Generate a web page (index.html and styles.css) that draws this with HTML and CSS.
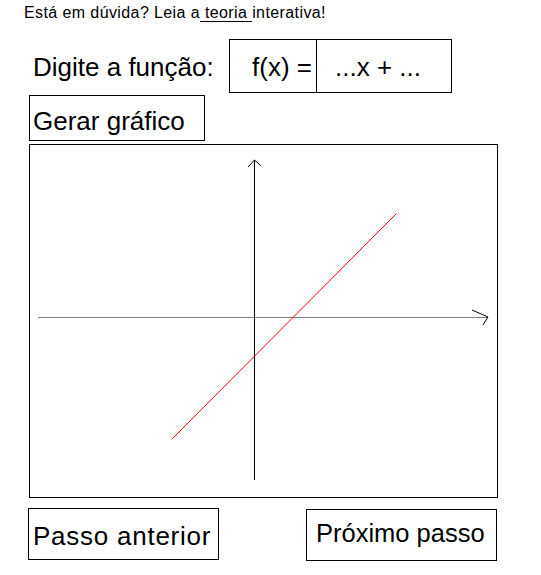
FILE: index.html
```html
<!DOCTYPE html>
<html lang="pt">

<head>
    <meta charset="UTF-8">
    <meta name="viewport" content="width=device-width, initial-scale=1.0">
    <title>Gráfico da função</title>
    <link rel="stylesheet" href="styles.css">
</head>

<body>
    <p class="hint">Está em dúvida? Leia a<a href="#" class="hint-link"> teoria </a>interativa!</p>

    <div class="func-row">
        <span class="func-label">Digite a função:</span>
        <div class="func-box">
            <span class="func-fx">f(x) =</span>
            <span class="func-expr">...x + ...</span>
        </div>
    </div>

    <button class="btn gen-btn">Gerar gráfico</button>

    <div class="graph">
        <svg class="graph-svg" width="467" height="352" viewBox="0 0 467 352">
            <!-- eixo x -->
            <line x1="8" y1="172.5" x2="458" y2="172.5" stroke="#808080" stroke-width="1" shape-rendering="crispEdges" />
            <polyline points="442,165 458,172 453,180" fill="none" stroke="#000" stroke-width="1" />
            <!-- eixo y -->
            <line x1="224.5" y1="15" x2="224.5" y2="335" stroke="#000" stroke-width="1" shape-rendering="crispEdges" />
            <polyline points="218,22 224.5,15 231,21" fill="none" stroke="#000" stroke-width="1" />
            <!-- reta -->
            <line x1="141.5" y1="294.5" x2="366.5" y2="68.5" stroke="#ff0000" stroke-width="1" />
        </svg>
    </div>

    <div class="steps">
        <button class="btn prev-btn">Passo anterior</button>
        <button class="btn next-btn">Próximo passo</button>
    </div>
</body>

</html>
```

FILE: styles.css
```css
* {
    box-sizing: border-box;
}

body {
    font-family: "Liberation Sans", Arial, sans-serif;
    margin: 0;
    padding-left: 28px;
    background: white;
    color: black;
}

.hint {
    margin: 0 0 0 -4px;
    padding-top: 3px;
    font-size: 16px;
    letter-spacing: 0.4px;
    line-height: 20px;
}

.hint-link {
    color: black;
    text-decoration: underline;
    text-underline-offset: 3px;
}

.func-row {
    display: flex;
    align-items: flex-start;
    margin-top: 16px;
}

.func-label,
.func-fx,
.func-expr,
.btn {
    font-size: 26px;
    line-height: 30px;
    white-space: nowrap;
}

.func-label {
    width: 201px;
    padding: 13px 0 0 5px;
}

.func-box {
    display: flex;
    width: 223px;
    height: 54px;
    border: 1px solid black;
}

.func-fx {
    width: 86px;
    padding: 12px 0 0 22px;
}

.func-expr {
    flex: 1;
    border-left: 1px solid black;
    padding: 12px 0 0 18px;
}

.btn {
    display: block;
    font-family: inherit;
    color: black;
    background: white;
    border: 1px solid black;
    border-radius: 0;
    text-align: left;
    cursor: pointer;
    margin: 0;
}

.gen-btn {
    width: 176px;
    margin: 2px 0 0 1px;
    padding: 10px 0 4px 3px;
}

.graph {
    width: 469px;
    height: 354px;
    margin: 3px 0 0 1px;
    border: 1px solid black;
}

.graph-svg {
    display: block;
}

.steps {
    display: flex;
    align-items: flex-start;
    gap: 87px;
    margin-top: 10px;
}

.prev-btn {
    width: 191px;
    padding: 12px 0 8px 4px;
    letter-spacing: 0.75px;
}

.next-btn {
    width: 191px;
    margin-top: 1px;
    padding: 8px 0 12px 9px;
    font-size: 25.5px;
}
```
